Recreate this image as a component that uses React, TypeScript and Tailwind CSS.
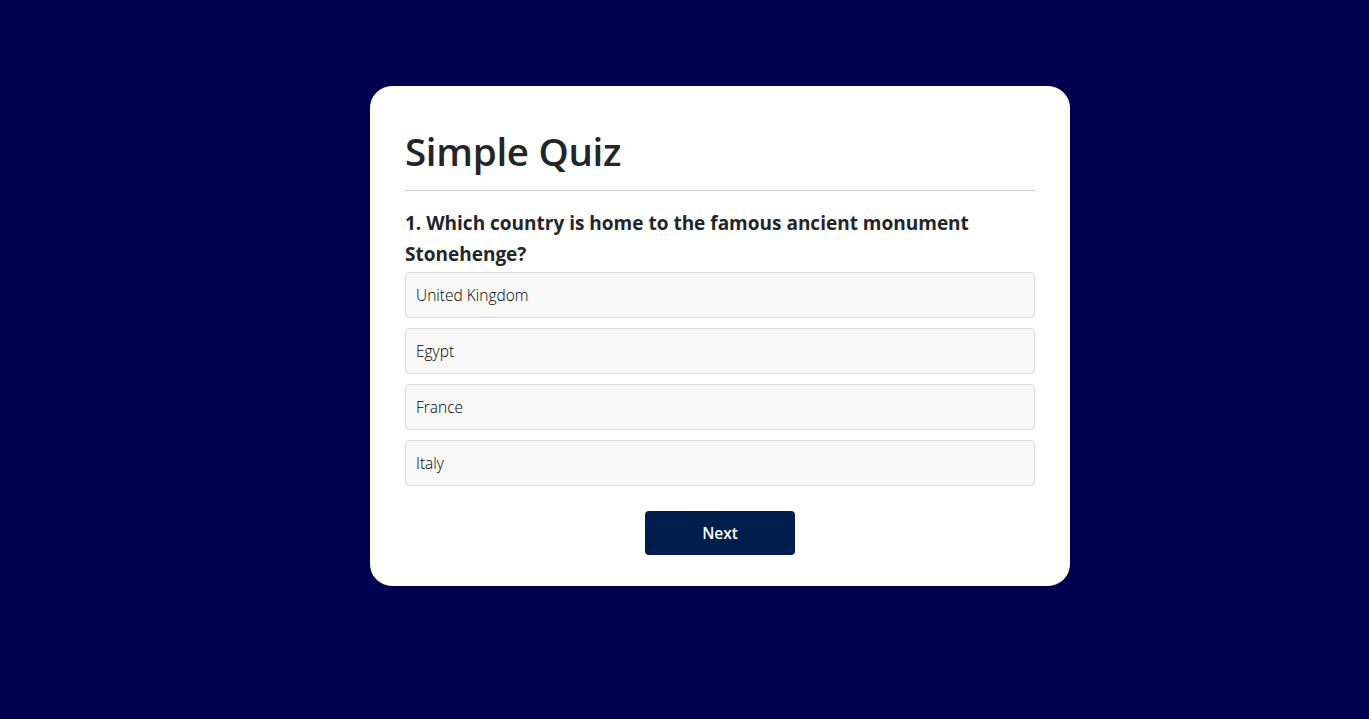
import React from 'react';

const OPTIONS = ['United Kingdom', 'Egypt', 'France', 'Italy'];

const App: React.FC = () => {
    return (
        <div className="min-h-screen w-full bg-[#000050] pt-[86px]" style={{ fontFamily: '"Open Sans", "Noto Sans", sans-serif' }}>
            <div className="ml-[370px] w-[700px] h-[500px] bg-white rounded-[22px] px-[35px] pt-[35px]">
                <h1 className="pt-[6px] text-[38.5px] leading-[48px] font-semibold text-[#222529] tracking-[-0.3px] pb-[15px] border-b border-[#cccccc]">
                    Simple Quiz
                </h1>
                <h2 className="mt-[17px] text-[19px] leading-[31px] font-bold text-[#222529]">
                    1. Which country is home to the famous ancient monument Stonehenge?
                </h2>
                <div className="mt-[2px] flex flex-col gap-[10px]">
                    {OPTIONS.map((opt) => (
                        <button
                            key={opt}
                            className="h-[46px] w-full text-left px-[10px] pt-[2px] bg-[#f8f8f8] border border-[#dddddd] rounded-[4px] text-[15.5px] font-light text-black"
                        >
                            {opt}
                        </button>
                    ))}
                </div>
                <div className="flex justify-center mt-[25px]">
                    <button className="w-[150px] h-[44px] pt-[2px] bg-[#001e4d] text-white text-[15.5px] font-semibold rounded-[4px]">
                        Next
                    </button>
                </div>
            </div>
        </div>
    );
};

export default App;
